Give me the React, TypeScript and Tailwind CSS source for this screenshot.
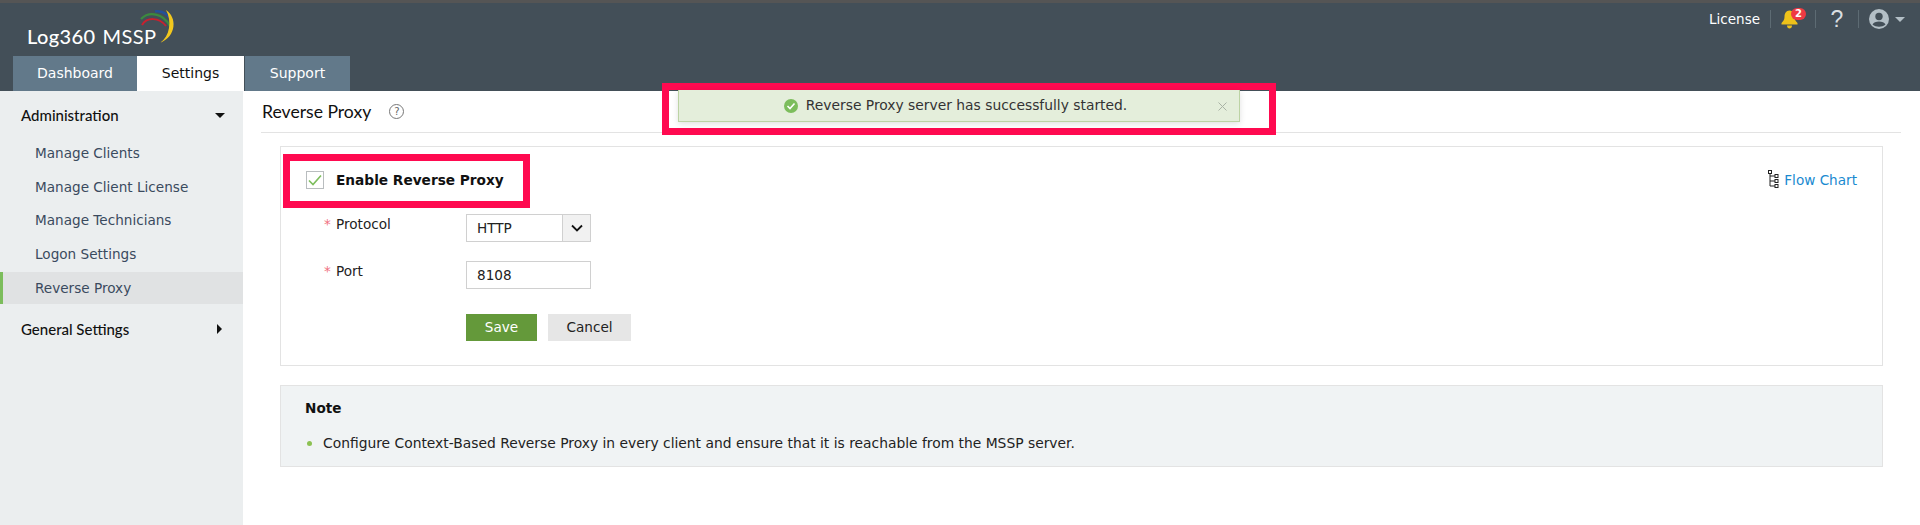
import React from "react";

function Logo() {
  return (
    <div className="relative ml-[27px] mt-[20px] h-[26px] w-[160px] flex items-baseline text-white leading-[26px]">
      <span className="text-[20px] font-medium font-['Lato','Noto_Sans',sans-serif] tracking-[0.4px]">Log360</span>
      <span className="ml-[7px] text-[20px] font-['Lato','Noto_Sans',sans-serif] font-normal tracking-[0.4px]">MSSP</span>
      <svg className="absolute left-[108px] top-[-15px]" width="45" height="40" viewBox="0 0 45 40" fill="none">
        <path d="M7 17 C 12 9, 24 9, 31 18" stroke="#c8202f" strokeWidth="2" />
        <path d="M6 11 C 14 3, 28 5, 35 18" stroke="#3c8a3e" strokeWidth="2.2" />
        <path d="M20 3.5 C 28 2, 36 8, 38 17" stroke="#24509a" strokeWidth="2.6" />
        <path d="M31 2 C 42 9, 42 28, 25 35 C 35 28, 37 13, 31 2 Z" fill="#f2c81e" />
      </svg>
    </div>
  );
}

function Tab({ label, active, w }: { label: string; active?: boolean; w: string }) {
  return (
    <div className={`${w} h-[35px] flex items-center justify-center text-[14px] ${active ? "bg-white text-[#111]" : "bg-[#62798a] text-white"}`}>
      {label}
    </div>
  );
}

function Sep() {
  return <div className="w-px h-[18px] bg-[#5d6b73]" />;
}

function Header() {
  return (
    <div className="relative h-[91px] bg-[#434f58] border-t-[3px] border-[#555555]">
      <div className="flex justify-between">
        <Logo />
        <div className="flex items-center h-[30px] text-white text-[13.5px] pr-[15px] gap-[10px] absolute right-0 top-[1px]">
          <span>License</span>
          <Sep />
          <div className="relative w-[24px] h-[20px]">
            <svg className="absolute left-0 top-[1px]" width="17" height="19" viewBox="0 0 17 19" fill="#eec21a">
              <path d="M8.5 0.5 C 12 0.5 13.5 3.5 13.5 7 C 13.5 10 15 11.5 16.5 13 L16.5 14.5 L0.5 14.5 L0.5 13 C 2 11.5 3.5 10 3.5 7 C 3.5 3.5 5 0.5 8.5 0.5 Z" />
              <path d="M6 15.5 H11 C 11 17.5 10 18.5 8.5 18.5 C 7 18.5 6 17.5 6 15.5 Z" />
            </svg>
            <span className="absolute left-[10px] top-[-1px] w-[15px] h-[12px] rounded-full bg-[#ee3a43] text-white text-[10px] font-bold leading-[12px] text-center">2</span>
          </div>
          <Sep />
          <span className="w-[22px] text-center text-[23px] leading-none text-[#d9dee1] font-['Liberation_Sans',sans-serif]">?</span>
          <Sep />
          <div className="flex items-center gap-[6px]">
            <svg width="20" height="20" viewBox="0 0 20 20">
              <circle cx="10" cy="10" r="10" fill="#b3bfc6" />
              <circle cx="10" cy="7.5" r="3.7" fill="#434f58" />
              <path d="M3.5 15.5 C 5 11.5 15 11.5 16.5 15.5 C 13 18.5 7 18.5 3.5 15.5 Z" fill="#434f58" />
            </svg>
            <span className="w-0 h-0 border-x-[5px] border-x-transparent border-t-[5px] border-t-[#b3bfc6]" />
          </div>
        </div>
      </div>
      <div className="absolute left-[13px] bottom-0 flex">
        <Tab label="Dashboard" w="w-[124px]" />
        <Tab label="Settings" active w="w-[107px]" />
        <div className="w-px" />
        <Tab label="Support" w="w-[105px]" />
      </div>
    </div>
  );
}

function SideItem({ label, active }: { label: string; active?: boolean }) {
  return (
    <div className={`h-[32px] mb-[1.6px] flex items-center pl-[35px] text-[13.6px] text-[#3a4a5e] ${active ? "bg-[#e0e2e3] border-l-[3px] border-[#7cbd5c] !pl-[32px]" : ""}`}>
      {label}
    </div>
  );
}

function Sidebar() {
  return (
    <div className="w-[243px] shrink-0 bg-[#ebeeef] pt-[8px]">
      <div className="h-[32px] flex items-center justify-between pl-[21px] pr-[18px] text-[15px] text-[#111] font-medium font-['Lato',sans-serif]">
        <span>Administration</span>
        <span className="w-0 h-0 border-x-[5.5px] border-x-transparent border-t-[5px] border-t-[#111]" />
      </div>
      <div className="mt-[6.5px]">
        <SideItem label="Manage Clients" />
        <SideItem label="Manage Client License" />
        <SideItem label="Manage Technicians" />
        <SideItem label="Logon Settings" />
        <SideItem label="Reverse Proxy" active />
      </div>
      <div className="h-[32px] mt-[9.5px] flex items-center justify-between pl-[21px] pr-[21px] text-[15px] text-[#111] font-medium font-['Lato',sans-serif]">
        <span>General Settings</span>
        <span className="w-0 h-0 border-y-[5px] border-y-transparent border-l-[5px] border-l-[#111]" />
      </div>
    </div>
  );
}

function FormRow({ label, children, mb }: { label: string; children: React.ReactNode; mb: string }) {
  return (
    <div className={`flex ${mb}`}>
      <div className="w-[142px] flex text-[13.6px] text-[#222] leading-[20px]">
        <span className="text-[#f0717f] w-[12px]">*</span>
        <span>{label}</span>
      </div>
      {children}
    </div>
  );
}

function Main() {
  return (
    <div className="relative flex-1 min-w-0 pl-[18px] pr-[19px]">
      <div className="h-[42px] border-b border-[#e3e3e3] flex items-center pl-[1px]">
        <span className="text-[17.6px] text-[#111] font-['Lato',sans-serif] pt-[1px]">Reverse Proxy</span>
        <span className="ml-[18px] w-[15px] h-[15px] rounded-full border border-[#777] text-[#666] text-[10px] leading-[13px] text-center">?</span>
      </div>

      <div className="relative mt-[13px] ml-[19px] mr-[18px] h-[220px] border border-[#e3e3e3]">
        <div className="flex justify-between pl-[25px] pt-[23px] pr-[25px]">
          <div className="flex items-center h-[20px]">
            <span className="w-[18px] h-[18px] border border-[#b9bdbf] flex items-center justify-center">
              <svg width="14" height="12" viewBox="0 0 14 12" fill="none">
                <path d="M1 6.5 L5 10.5 L13 1.5" stroke="#7cbd5c" strokeWidth="1.6" />
              </svg>
            </span>
            <span className="ml-[12px] text-[13.7px] font-bold text-[#111]">Enable Reverse Proxy</span>
          </div>
          <div className="flex items-center h-[20px]">
            <svg width="11" height="20" viewBox="0 0 11 20" fill="none" stroke="#222">
              <rect x="0.5" y="0.5" width="3" height="3" />
              <rect x="7" y="4.5" width="3" height="3" />
              <rect x="7" y="9.5" width="3" height="3" />
              <rect x="7" y="14.5" width="3" height="3" />
              <path d="M2 4 V16 H7 M2 6 H7 M2 11 H7" />
            </svg>
            <span className="ml-[5px] text-[13.6px] text-[#1a8ad0]">Flow Chart</span>
          </div>
        </div>
        <div className="ml-[43px] mt-[24px]">
          <FormRow label="Protocol" mb="mb-[19px]">
            <div className="w-[125px] h-[28px] border border-[#d0d0d0] flex text-[13.6px] text-[#222] items-stretch">
              <span className="flex-1 pl-[10px] flex items-center">HTTP</span>
              <span className="w-[28px] bg-[#f1f1f1] border-l border-[#d0d0d0] flex items-center justify-center">
                <svg width="12" height="8" viewBox="0 0 12 8" fill="none"><path d="M1 1.5 L6 6.5 L11 1.5" stroke="#111" strokeWidth="1.8" /></svg>
              </span>
            </div>
          </FormRow>
          <FormRow label="Port" mb="mb-[25px]">
            <div className="w-[125px] h-[28px] border border-[#d0d0d0] flex items-center pl-[10px] text-[13.6px] text-[#222]">8108</div>
          </FormRow>
          <div className="flex ml-[142px] gap-[11px]">
            <div className="w-[71px] h-[27px] bg-[#64993a] text-white text-[13.6px] flex items-center justify-center">Save</div>
            <div className="w-[83px] h-[27px] bg-[#e6e6e6] text-[#222] text-[13.6px] flex items-center justify-center">Cancel</div>
          </div>
        </div>
        <div className="absolute left-[2px] top-[7px] w-[247px] h-[54px] border-[7px] border-[#ff0a50]" />
      </div>

      <div className="mt-[19px] ml-[19px] mr-[18px] h-[82px] bg-[#f0f3f4] border border-[#e3e3e3] pl-[24px] pt-[12px]">
        <div className="text-[13.6px] font-bold text-[#111] leading-[20px]">Note</div>
        <div className="flex items-center mt-[15px] text-[13.85px] text-[#222] leading-[20px]">
          <span className="w-[5px] h-[5px] ml-[2px] rounded-full bg-[#8cc152]" />
          <span className="ml-[11px]">Configure Context-Based Reverse Proxy in every client and ensure that it is reachable from the MSSP server.</span>
        </div>
      </div>
    </div>
  );
}

export default function App() {
  return (
    <div className="relative w-[1920px] h-[525px] overflow-hidden bg-white font-['DejaVu_Sans',sans-serif]">
      <Header />
      <div className="flex h-[434px]">
        <Sidebar />
        <Main />
      </div>
      <div className="absolute left-[662px] top-[83px] w-[614px] h-[52px] border-[7px] border-[#ff0a50]">
        <div className="relative ml-[9px] w-[562px] h-[32px] bg-[#e4eedb] border border-[#bcd3a4] border-t-0 shadow-[0_2px_6px_rgba(0,0,0,0.12)] flex items-center justify-center pr-[7px] text-[13.85px] text-[#333]">
          <svg className="mr-[8px]" width="14" height="14" viewBox="0 0 14 14">
            <circle cx="7" cy="7" r="7" fill="#7cbd5c" />
            <path d="M3.5 7 L6 9.5 L10.5 4.5" stroke="#fff" strokeWidth="1.6" fill="none" />
          </svg>
          <span>Reverse Proxy server has successfully started.</span>
          <svg className="absolute right-[12px] top-[12px]" width="9" height="9" viewBox="0 0 9 9"><path d="M0.5 0.5 L8.5 8.5 M8.5 0.5 L0.5 8.5" stroke="#a9b3a5" strokeWidth="1" /></svg>
        </div>
      </div>
    </div>
  );
}
